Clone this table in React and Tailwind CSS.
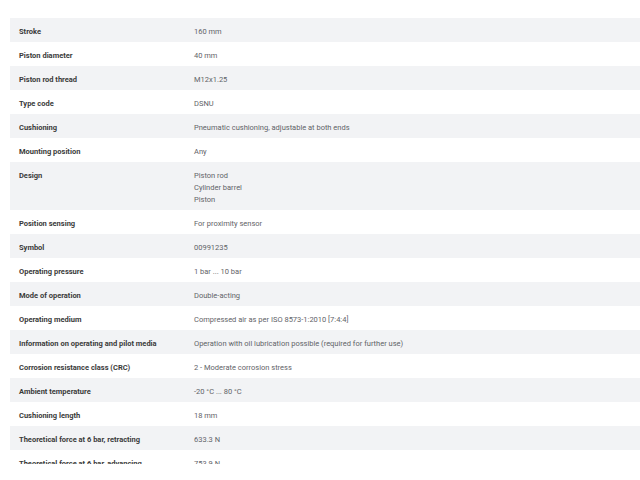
// ============================================
// TECHNICAL DATA TABLE
// ============================================

import React from 'react';

const rows = [
  ['Stroke', ['160 mm']],
  ['Piston diameter', ['40 mm']],
  ['Piston rod thread', ['M12x1.25']],
  ['Type code', ['DSNU']],
  ['Cushioning', ['Pneumatic cushioning, adjustable at both ends']],
  ['Mounting position', ['Any']],
  ['Design', ['Piston rod', 'Cylinder barrel', 'Piston']],
  ['Position sensing', ['For proximity sensor']],
  ['Symbol', ['00991235']],
  ['Operating pressure', ['1 bar ... 10 bar']],
  ['Mode of operation', ['Double-acting']],
  ['Operating medium', ['Compressed air as per ISO 8573-1:2010 [7:4:4]']],
  ['Information on operating and pilot media', ['Operation with oil lubrication possible (required for further use)']],
  ['Corrosion resistance class (CRC)', ['2 - Moderate corrosion stress']],
  ['Ambient temperature', ['-20 °C ... 80 °C']],
  ['Cushioning length', ['18 mm']],
  ['Theoretical force at 6 bar, retracting', ['633.3 N']],
  ['Theoretical force at 6 bar, advancing', ['753.9 N']],
];

const App = () => {
  return (
    <div className="w-[640px] h-[480px] bg-white pt-[18px] pl-[10px] font-['Roboto',sans-serif] overflow-hidden">
      {/* Table */}
      <div className="h-[446px] overflow-hidden">
        {rows.map(([label, values], i) => (
          <div
            key={label}
            className={`flex pt-[8px] pb-[4px] text-[7.5px] leading-[12px] ${i % 2 === 0 ? 'bg-[#f2f3f5]' : 'bg-white'}`}
          >
            <div className="w-[184px] pl-[9px] font-bold text-[#3a3a3a] shrink-0">{label}</div>
            <div className="text-[#5f6368] flex flex-col">
              {values.map((v) => (
                <span key={v}>{v}</span>
              ))}
            </div>
          </div>
        ))}
      </div>
    </div>
  );
};

export default App;
